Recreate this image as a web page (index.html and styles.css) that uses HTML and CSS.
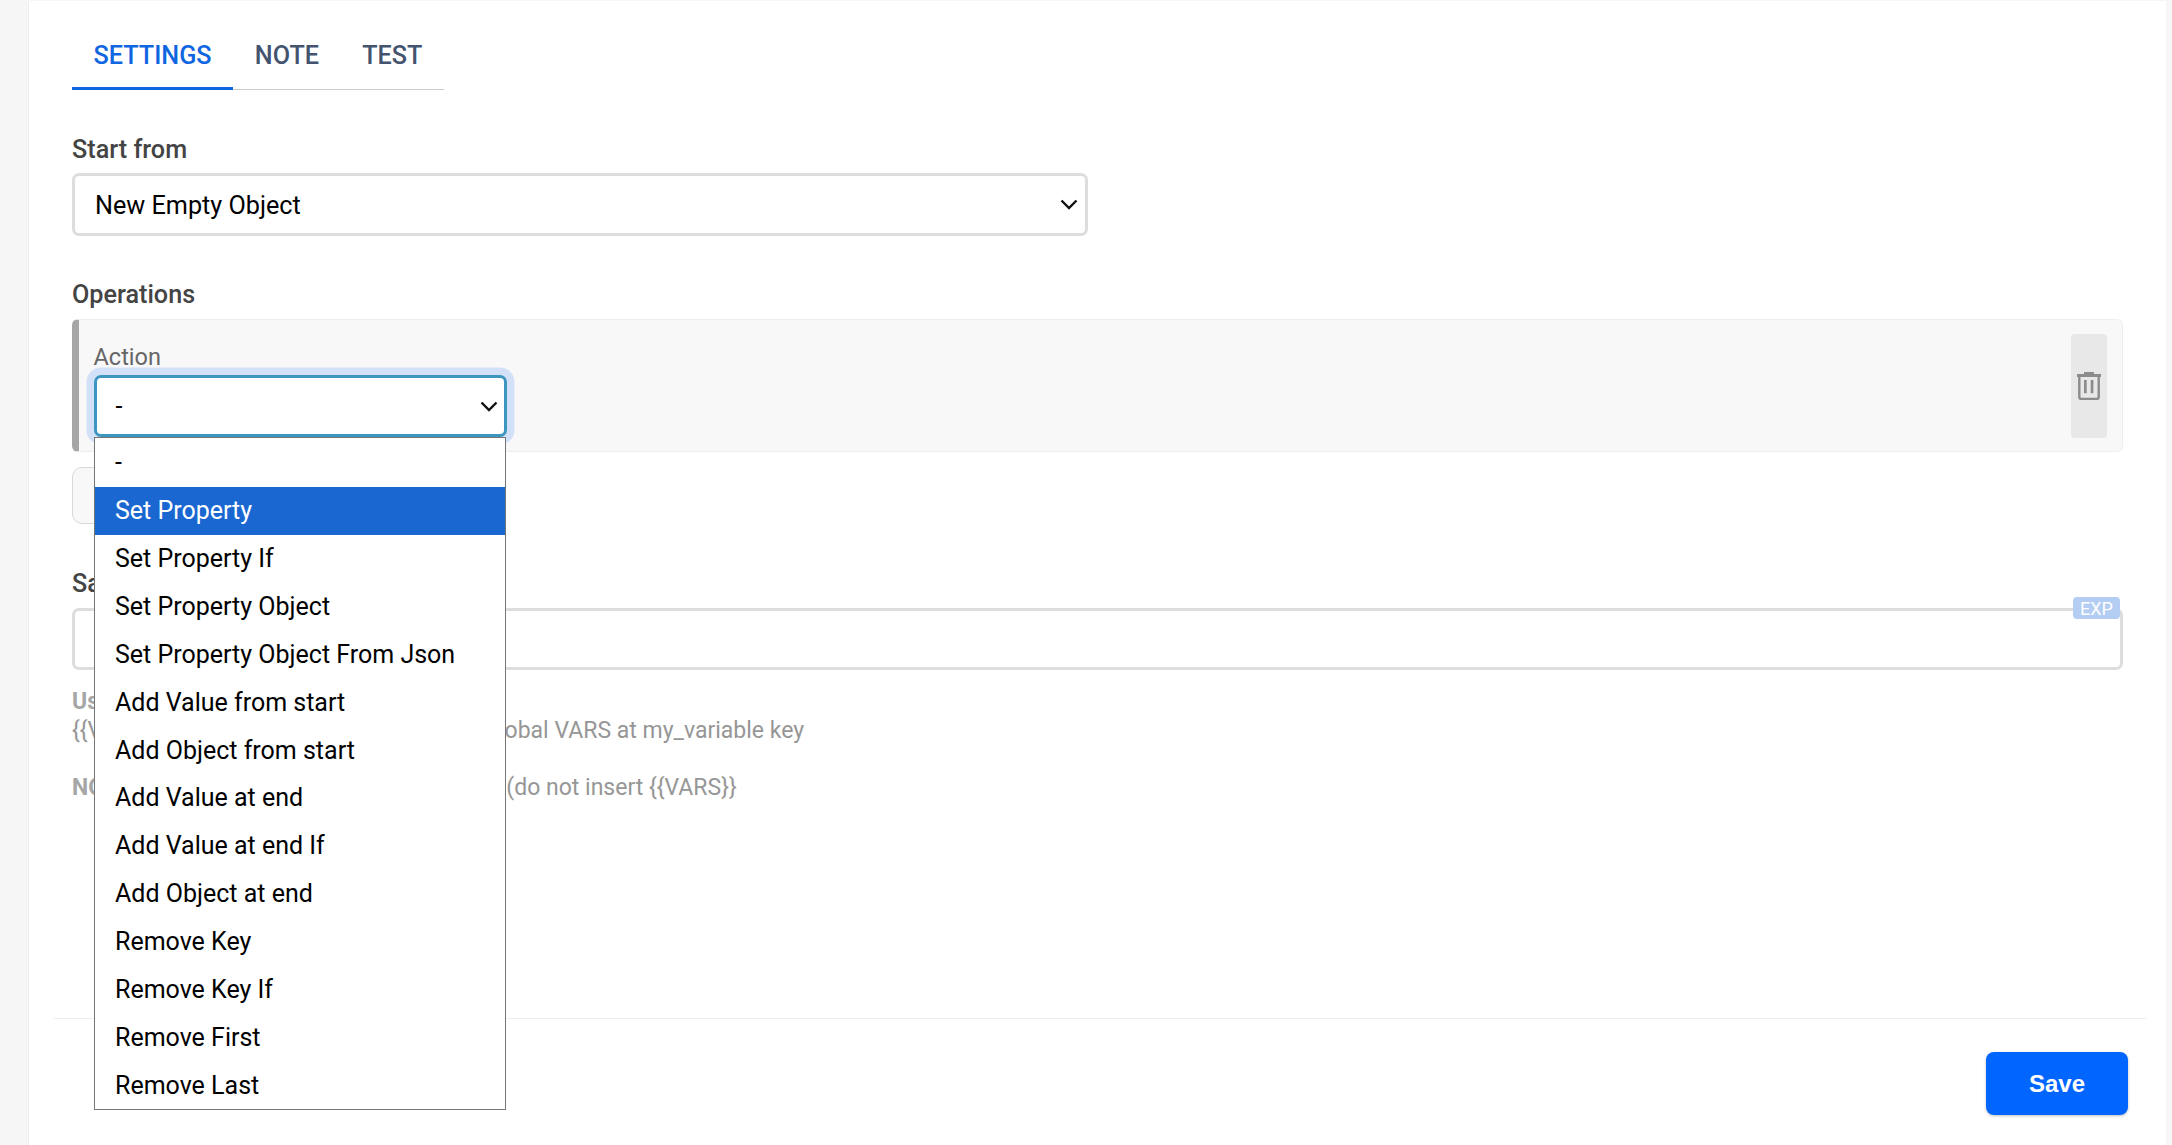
FILE: index.html
```html
<!DOCTYPE html>
<html lang="en">
<head>
<meta charset="utf-8">
<title>Settings</title>
<link rel="stylesheet" href="styles.css">
</head>
<body>
<div class="page">
  <main class="panel">
    <div class="content">
      <nav class="tabs">
        <a class="tab tab-active">SETTINGS</a>
        <a class="tab">NOTE</a>
        <a class="tab">TEST</a>
      </nav>

      <label class="label label-start">Start from</label>
      <div class="select select-start">
        <span class="select-value">New Empty Object</span>
        <svg class="chevron" viewBox="0 0 18 11"><path d="M1.500 1.500 9 9l7.500-7.500"/></svg>
      </div>

      <label class="label label-ops">Operations</label>
      <div class="op-card">
        <div class="op-main">
          <div class="op-label">Action</div>
          <div class="select select-focus">
            <span>-</span>
            <svg class="chevron" viewBox="0 0 18 11"><path d="M1.500 1.500 9 9l7.500-7.500"/></svg>
          </div>
          <ul class="menu">
            <li>-</li>
            <li class="menu-active">Set Property</li>
            <li>Set Property If</li>
            <li>Set Property Object</li>
            <li>Set Property Object From Json</li>
            <li>Add Value from start</li>
            <li>Add Object from start</li>
            <li>Add Value at end</li>
            <li>Add Value at end If</li>
            <li>Add Object at end</li>
            <li>Remove Key</li>
            <li>Remove Key If</li>
            <li>Remove First</li>
            <li>Remove Last</li>
          </ul>
        </div>
        <div class="op-delete">
          <svg class="trash" viewBox="0 0 24 28"><path class="trash-fill" d="M0 2h24v3H0zM7 0h10v2H7zM7 8h2.700v13.300H7zM13.700 8h2.700v13.300h-2.700z"/><path class="trash-line" d="M2.300 5v20a2 2 0 0 0 2 2h15.400a2 2 0 0 0 2-2V5"/></svg>
        </div>
      </div>
      <button class="add-btn" aria-label="Add"></button>

      <label class="label label-save">Save to</label>
      <div class="exp-field">
        <span class="exp-badge">EXP</span>
      </div>
      <div class="help">
        <p class="help-head">Use</p>
        <p>{{VARS.my_variable}} holds the object in global VARS at my_variable key</p>
        <p class="help-note"><strong>NOTE:</strong> type the variable name my_variable (do not insert {{VARS}}</p>
      </div>
    </div>
    <footer class="footer">
      <button class="save">Save</button>
    </footer>
  </main>
</div>
</body>
</html>
```

FILE: styles.css
```css
* { box-sizing: border-box; }
html, body { margin: 0; height: 100%; }
body {
  background: #f6f6f6;
  font-family: Roboto, "Liberation Sans", sans-serif;
  overflow: hidden;
}
.page {
  height: 1145px;
  padding: 1px 6px 0 28px;
}
.panel {
  background: #fff;
  height: 100%;
  border-left: 1px solid #ececec;
  display: flex;
  flex-direction: column;
}
.content {
  flex: 1;
  padding: 0 43px;
}
.tabs {
  display: flex;
  width: 372px;
  height: 89px;
  border-bottom: 1px solid #ccc;
}
.tab {
  height: 89px;
  padding: 40px 21.6px 0;
  font-size: 25.2px;
  line-height: 30px;
  font-weight: 500;
  color: #44546f;
}
.tab-active {
  color: #0f66e0;
  border-bottom: 3px solid #0f66e0;
}
.label {
  display: block;
  font-size: 25.2px;
  line-height: 28px;
  font-weight: 500;
  color: #444;
}
.label-start { margin-top: 46px; }
.label-ops { margin-top: 45px; }
.label-save { margin-top: 46px; }
.select {
  display: flex;
  align-items: center;
  justify-content: space-between;
  background: #fff;
  border: 3px solid #ddd;
  border-radius: 7px;
  font-size: 25.2px;
  color: #000;
}
.select-value { padding-top: 2px; }
.select-start {
  width: 1016px;
  height: 63px;
  margin-top: 9px;
  padding: 0 7px 0 20px;
}
.chevron {
  width: 18px;
  height: 11px;
  fill: none;
  stroke: #111;
  stroke-width: 2.400;
}
.op-card {
  display: flex;
  justify-content: space-between;
  height: 133px;
  margin-top: 10px;
  padding: 14px 15px 14px 0;
  background: #f8f8f8;
  border: 1px solid #eee;
  border-left: 7px solid #a6a6a6;
  border-radius: 6px;
}
.op-main {
  position: relative;
  padding-left: 14.500px;
  width: 432px;
}
.op-label {
  font-size: 23.500px;
  line-height: 26px;
  margin-top: 10px;
  color: #666;
}
.select-focus {
  width: 413px;
  height: 62px;
  margin-top: 5px;
  padding: 0 6px 0 19px;
  border-color: #3d96c0;
  box-shadow: 0 0 0 7.500px #d3e1f8;
}
.menu {
  position: absolute;
  left: 15px;
  top: 103px;
  width: 412px;
  height: 673px;
  margin: 0;
  padding: 1px 0 0;
  list-style: none;
  display: flex;
  flex-direction: column;
  background: #fff;
  border: 1px solid #767676;
  z-index: 2;
}
.menu li {
  flex: 1;
  display: flex;
  align-items: center;
  padding-left: 20px;
  font-size: 25px;
  color: #000;
}
.menu .menu-active {
  background: #1a67d2;
  color: #fff;
}
.op-delete {
  display: flex;
  align-items: center;
  justify-content: center;
  width: 36px;
  height: 104px;
  background: #e8e8e8;
  border-radius: 4px;
}
.trash {
  width: 24px;
  height: 28px;
}
.trash-fill { fill: #8c8c8c; }
.trash-line {
  fill: none;
  stroke: #8c8c8c;
  stroke-width: 2.400;
}
.add-btn {
  display: block;
  width: 200px;
  height: 57px;
  margin-top: 15px;
  background: #f8f8f8;
  border: 1px solid #d8d8d8;
  border-radius: 10px;
}
.exp-field {
  position: relative;
  height: 62px;
  margin-top: 10px;
  border: 3px solid #ddd;
  border-radius: 7px;
}
.exp-badge {
  position: absolute;
  right: 0;
  top: -14px;
  width: 47px;
  height: 22px;
  border-radius: 4px;
  background: #b3cdf3;
  color: #fff;
  font-size: 18px;
  line-height: 23px;
  text-align: center;
}
.help {
  margin-top: 17px;
  font-size: 23px;
  line-height: 29px;
  color: #969696;
}
.help p { margin: 0; }
.help .help-head { font-weight: 700; color: #a6a6a6; }
.help strong { font-weight: 700; color: #a6a6a6; }
.help .help-note { margin-top: 28px; }
.footer {
  display: flex;
  justify-content: flex-end;
  height: 127px;
  margin: 0 20px 0 25px;
  padding: 33px 18px 0 0;
  border-top: 1px solid #eee;
}
.save {
  width: 142px;
  height: 63px;
  background: #0066ff;
  color: #fff;
  border: 0;
  border-radius: 8px;
  font-family: "Liberation Sans", sans-serif;
  font-size: 24px;
  font-weight: 700;
  box-shadow: 0 1px 3px rgba(0,0,0,.25);
}
```
